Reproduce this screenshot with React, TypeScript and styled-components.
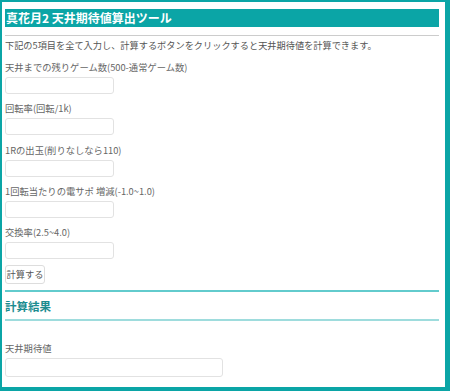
import React from "react";
import styled, { createGlobalStyle } from "styled-components";

const GlobalStyle = createGlobalStyle`
    html, body {
        margin: 0;
        padding: 0;
        background: #ffffff;
    }
    body {
        font-family: "Noto Sans CJK JP", "Noto Sans", sans-serif;
    }
`;

const fields = [
    "天井までの残りゲーム数(500-通常ゲーム数)",
    "回転率(回転/1k)",
    "1Rの出玉(削りなしなら110)",
    "1回転当たりの電サポ 増減(-1.0~1.0)",
    "交換率(2.5~4.0)",
];

const App: React.FC = () => {
    return (
        <>
            <GlobalStyle />
            <Frame>
                <Title>真花月2 天井期待値算出ツール</Title>
                <GrayRule />
                <Description>下記の5項目を全て入力し、計算するボタンをクリックすると天井期待値を計算できます。</Description>

                {fields.map((label) => (
                    <Field key={label}>
                        <Label>{label}</Label>
                        <Input type="text" />
                    </Field>
                ))}

                <CalcButton type="button">計算する</CalcButton>

                <TealRule />
                <ResultTitle>計算結果</ResultTitle>
                <TealRule light />

                <ResultField>
                    <Label>天井期待値</Label>
                    <Input type="text" wide />
                </ResultField>
            </Frame>
        </>
    );
};

export default App;

const Frame = styled.div`
    box-sizing: border-box;
    width: 450px;
    height: 391px;
    border-style: solid;
    border-color: #0ba5a6;
    border-width: 2px 5px 4px 2px;
    padding: 7px 6px 0 3px;
    overflow: hidden;
    display: flex;
    flex-direction: column;
`;

const Title = styled.h1`
    margin: 0;
    height: 18px;
    line-height: 18px;
    background: #0ba5a6;
    color: #ffffff;
    font-size: 12px;
    font-weight: 700;
    padding-left: 1px;
    white-space: nowrap;
`;

const GrayRule = styled.div`
    height: 1px;
    background: #cccccc;
    margin-top: 8px;
`;

const Description = styled.p`
    margin: 2px 0 8px 0;
    font-size: 9.2px;
    line-height: 14px;
    color: #555555;
    white-space: nowrap;
`;

const Field = styled.div`
    display: flex;
    flex-direction: column;
    align-items: flex-start;
    margin-bottom: 7.3px;
`;

const ResultField = styled(Field)`
    margin-top: 20px;
`;

const Label = styled.label`
    font-size: 9.3px;
    line-height: 14px;
    color: #666666;
    margin-bottom: 3px;
    white-space: nowrap;
`;

const Input = styled.input<{ wide?: boolean }>`
    box-sizing: border-box;
    width: ${(props) => (props.wide ? "218px" : "109px")};
    height: ${(props) => (props.wide ? "19px" : "17px")};
    margin: 0;
    padding: 0 4px;
    border: 1px solid #e2e2e2;
    border-radius: 3px;
    background: #ffffff;
    outline: none;
`;

const CalcButton = styled.button`
    box-sizing: border-box;
    align-self: flex-start;
    width: 40px;
    height: 19px;
    margin: -1px 0 6px 0;
    padding: 0;
    border: 1px solid #dddddd;
    border-radius: 3px;
    background: #ffffff;
    color: #555555;
    font-family: "Noto Sans CJK JP", sans-serif;
    font-size: 9.3px;
    line-height: 17px;
    white-space: nowrap;
`;

const TealRule = styled.div<{ light?: boolean }>`
    height: 2px;
    background: ${(props) => (props.light ? "#9edcdd" : "#62cbcd")};
`;

const ResultTitle = styled.h2`
    margin: 0;
    height: 27px;
    line-height: 29px;
    font-size: 11.5px;
    font-weight: 700;
    color: #1b8c90;
`;
